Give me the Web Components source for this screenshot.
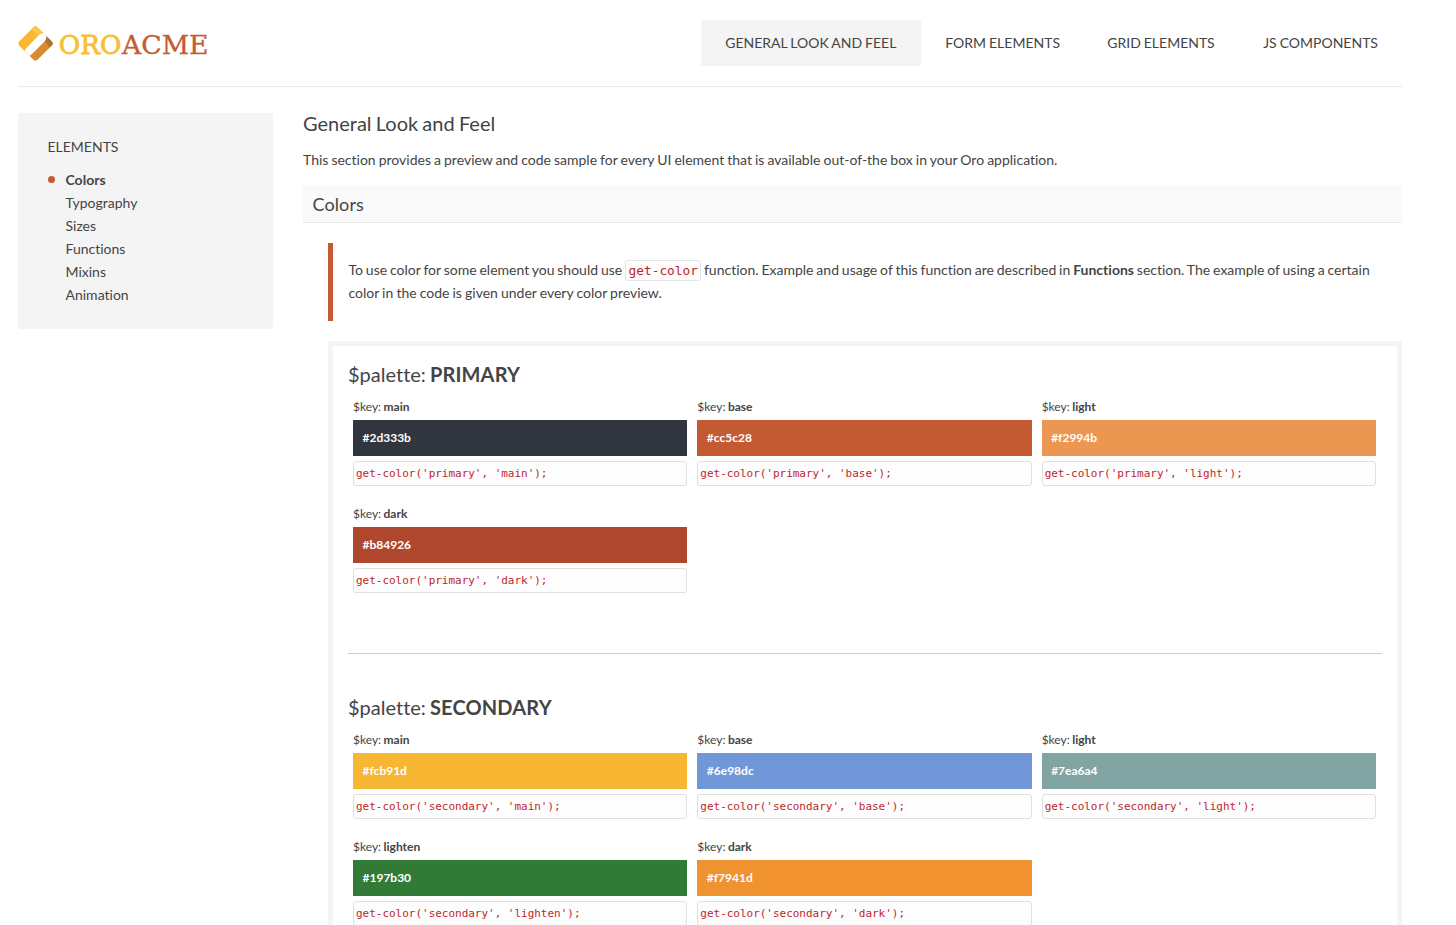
<!DOCTYPE html>
<html lang="en">
<head>
<meta charset="utf-8">
<title>General Look and Feel</title>
<style>
html, body { margin: 0; height: 925px; overflow: hidden; background: #fff; }
body { font: 14px/23px Lato, "Open Sans", sans-serif; color: #444; word-spacing: -0.6px; font-variant-ligatures: none; }
</style>
</head>
<body>
<style-guide>
  <site-header slot="header">
    <nav-item active style="--w:172px">GENERAL LOOK AND FEEL</nav-item>
    <nav-item style="--w:114px">FORM ELEMENTS</nav-item>
    <nav-item style="--w:108px">GRID ELEMENTS</nav-item>
    <nav-item style="--w:115px">JS COMPONENTS</nav-item>
  </site-header>
  <side-menu slot="side" label="ELEMENTS">
    <side-item active>Colors</side-item>
    <side-item>Typography</side-item>
    <side-item>Sizes</side-item>
    <side-item>Functions</side-item>
    <side-item>Mixins</side-item>
    <side-item>Animation</side-item>
  </side-menu>
  <page-intro></page-intro>
  <usage-note></usage-note>
  <palette-frame>
    <color-palette name="PRIMARY" key="primary">
      <color-swatch palette="primary" key="main" value="#2d333b" fill="#31353e"></color-swatch>
      <color-swatch palette="primary" key="base" value="#cc5c28" fill="#c35a31"></color-swatch>
      <color-swatch palette="primary" key="light" value="#f2994b" fill="#eb9751"></color-swatch>
      <color-swatch palette="primary" key="dark" value="#b84926" fill="#af472e"></color-swatch>
    </color-palette>
    <color-palette name="SECONDARY" key="secondary">
      <color-swatch palette="secondary" key="main" value="#fcb91d" fill="#f7b733"></color-swatch>
      <color-swatch palette="secondary" key="base" value="#6e98dc" fill="#7197d8"></color-swatch>
      <color-swatch palette="secondary" key="light" value="#7ea6a4" fill="#81a5a2"></color-swatch>
      <color-swatch palette="secondary" key="lighten" value="#197b30" fill="#327b37"></color-swatch>
      <color-swatch palette="secondary" key="dark" value="#f7941d" fill="#ef922f"></color-swatch>
    </color-palette>
  </palette-frame>
</style-guide>
<script>
const define = (name, render) => customElements.define(name, class extends HTMLElement {
  connectedCallback() {
    if (!this.shadowRoot) this.attachShadow({ mode: 'open' }).innerHTML = render(this);
  }
});

define('style-guide', () => `
<style>
:host { display: block; width: 1384px; height: 925px; overflow: hidden; margin-left: 18px; }
.columns { display: grid; grid-template-columns: 255px 1099px; grid-template-rows: 812px; column-gap: 30px; align-items: start; padding-top: 26px; }
main { height: 812px; overflow: hidden; }
</style>
<slot name="header"></slot>
<div class="columns"><slot name="side"></slot><main><slot></slot></main></div>`);

define('site-header', () => `
<style>
:host { display: flex; justify-content: space-between; align-items: flex-start; box-sizing: border-box; height: 87px; padding-top: 20px; border-bottom: 1px solid #e8e8e8; }
nav { display: flex; }
</style>
<brand-logo></brand-logo><nav><slot></slot></nav>`);

define('brand-logo', () => `
<style>:host { display: block; height: 46px; } svg { display: block; }</style>
<svg width="196" height="46" viewBox="0 0 196 46">
  <defs><clipPath id="gem"><rect x="4.5" y="10.5" width="26" height="26" rx="3.2" transform="rotate(45 17.5 23.5)"/></clipPath></defs>
  <g clip-path="url(#gem)">
    <path fill="#f8b833" d="M-2 24 18 3 30 14 4 40Z"/>
    <path fill="#fbc750" d="M12 9 18 3 28 13 24 13.500 21 15Z"/>
    <path fill="#d98b34" d="M4 37 27 16 40 24 17 47Z"/>
    <path fill="#a87436" d="M27 13 40 23 31.500 27.500 27 21Z"/>
    <path fill="#fff" d="M8 28.500 20.500 15.500Q24.500 12 27.300 13.300 29.600 17 27 21L14.500 33.500Q10.500 38 7.800 36.500 5.500 32 8 28.500Z"/>
  </g>
  <g font-family="DejaVu Serif" font-size="26.500">
    <text x="40.800" y="33.600" textLength="62.500" lengthAdjust="spacingAndGlyphs" fill="#f9be35" stroke="#f9be35" stroke-width=".8">ORO</text>
    <text x="104" y="33.600" textLength="86.500" lengthAdjust="spacingAndGlyphs" fill="#c45b32" stroke="#c45b32" stroke-width=".35">ACME</text>
  </g>
</svg>`);

define('nav-item', () => `
<style>
:host { display: block; box-sizing: content-box; width: var(--w); padding: 0 23.800px 0 24.200px; line-height: 46px; white-space: nowrap; }
:host([active]) { background: #f4f4f4; }
</style><slot></slot>`);

define('side-menu', el => `
<style>
:host { display: block; box-sizing: border-box; height: 216px; padding: 22px 29.500px; background: #f4f4f4; border-radius: 3px; }
.label { margin-bottom: 10px; }
</style><div class="label">${el.getAttribute('label')}</div><slot></slot>`);

define('side-item', () => `
<style>
:host { display: flex; align-items: center; padding-left: 18px; }
:host([active]) { font-weight: 700; }
:host([active])::before { content: ""; width: 7px; height: 7px; border-radius: 50%; background: #c35a31; margin-left: -17.500px; margin-right: 10.500px; }
</style><slot></slot>`);

define('page-intro', () => `
<style>
:host { display: block; }
h1 { margin: 0; font-size: 20px; font-weight: 400; line-height: 20px; word-spacing: -0.9px; }
p { margin: 15px 0 14px; word-spacing: -0.55px; }
h2 { box-sizing: border-box; height: 38px; margin: 0; padding-left: 9.500px; font-size: 18px; font-weight: 400; line-height: 39px; letter-spacing: .1px; background: #fafafa; border-bottom: 1px solid #e8e8e8; }
</style>
<h1>General Look and Feel</h1>
<p>This section provides a preview and code sample for every UI element that is available out-of-the box in your Oro application.</p>
<h2>Colors</h2>`);

define('usage-note', () => `
<style>
:host { display: block; box-sizing: border-box; height: 78px; margin: 20px 0 20px 25px; padding: 15px 15.500px 0; border-left: 5px solid #c35a31; }
p { margin: 0; white-space: nowrap; word-spacing: -0.72px; }
.last { word-spacing: -0.5px; }
b { font-weight: 700; }
code { display: inline-block; box-sizing: border-box; width: 76px; height: 21px; margin: -4px 0; padding-left: 2.500px; font: 12.800px/19px "DejaVu Sans Mono", monospace; color: #bf1f2c; border: 1px solid #e4e4e4; border-radius: 3px; background: #fdfdfd; }
</style>
<p>To use color for some element you should use <code>get-color</code> function. Example and usage of this function are described in <b>Functions</b> section. The example of using a certain<br><span class="last">color in the code is given under every color preview.</span></p>`);

define('palette-frame', () => `
<style>
:host { display: block; margin-left: 25px; padding: 0 15px; border: 5px solid #f4f4f4; }
</style><slot></slot>`);

define('color-palette', el => `
<style>
:host { display: block; box-sizing: border-box; height: 333px; padding-top: 15px; }
:host(:first-child) { height: 308px; border-bottom: 1px solid #ccc; }
:host(:last-child) { padding-top: 40px; }
h3 { margin: 0 0 8px; font-size: 20px; font-weight: 400; line-height: 26px; word-spacing: -1px; }
b { letter-spacing: .15px; }
.grid { display: grid; grid-template-columns: repeat(3, 1fr); grid-auto-rows: 107px; width: 1033px; }
</style>
<h3>$palette: <b>${el.getAttribute('name')}</b></h3><div class="grid"><slot></slot></div>`);

define('color-swatch', el => {
  const a = n => el.getAttribute(n);
  return `
<style>
:host { display: block; padding: 0 5px; font-size: 12px; }
.key { line-height: 24px; padding-bottom: 1px; }
.fill { height: 36px; line-height: 36px; padding-left: 9.500px; color: #fff; font-weight: 700; background: ${a('fill')}; }
code { display: block; box-sizing: border-box; height: 25px; margin-top: 5px; padding-left: 2px; font: 11px/23px "DejaVu Sans Mono", monospace; letter-spacing: -.02px; word-spacing: 0; color: #bf1f2c; background: #fdfdfd; border: 1px solid #e0e0e0; border-radius: 3px; }
</style>
<div class="key">$key: <b>${a('key')}</b></div>
<div class="fill">${a('value')}</div>
<code>get-color('${a('palette')}', '${a('key')}');</code>`;
});
</script>
</body>
</html>
